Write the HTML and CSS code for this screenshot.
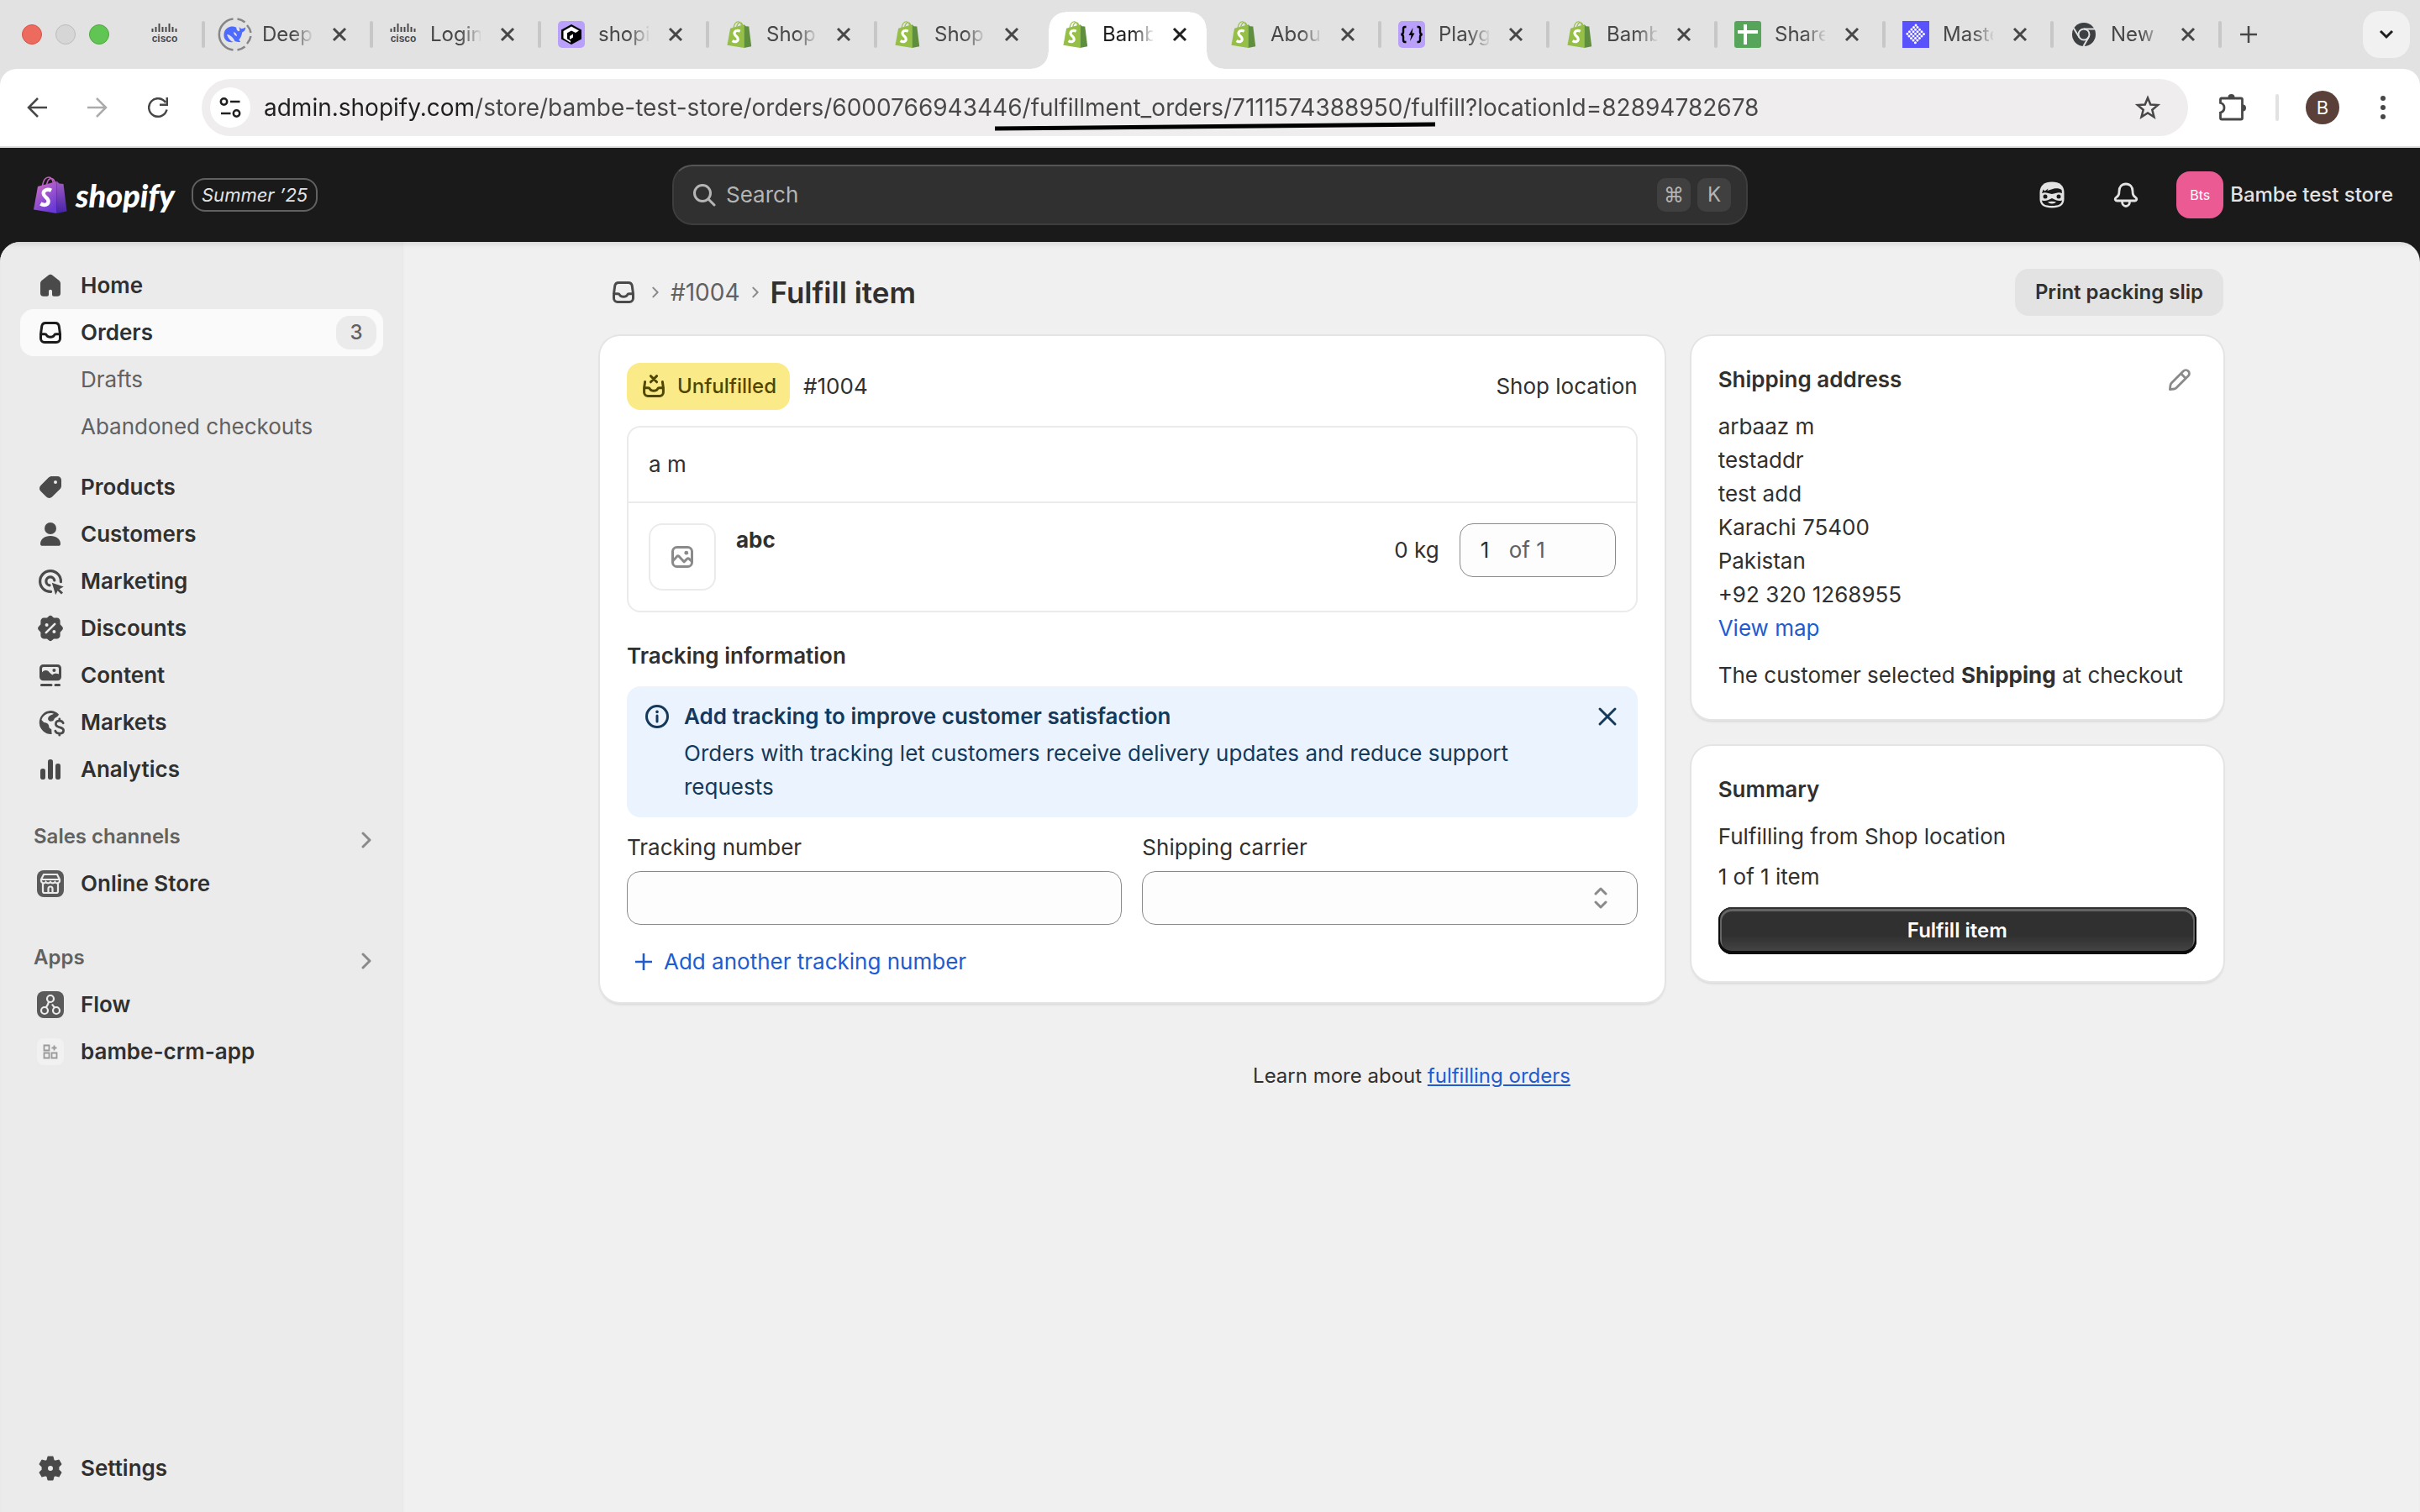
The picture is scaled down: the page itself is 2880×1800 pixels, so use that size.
FILE: index.html
```html
<!DOCTYPE html>
<html lang="en">
<head>
    <meta charset="UTF-8">
    <meta name="viewport" content="width=device-width, initial-scale=1.0">
    <title>Fulfill item</title>
    <link rel="stylesheet" href="styles.css">
</head>
<body>
    <!-- shared icons -->
    <svg class="sprite" aria-hidden="true">
        <defs>
            <linearGradient id="bagLeft" x1="0" y1="0" x2="0.6" y2="1">
                <stop offset="0" stop-color="#d873c4"/>
                <stop offset="1" stop-color="#6a3ad6"/>
            </linearGradient>
            <linearGradient id="bagRight" x1="0" y1="0" x2="0" y2="1">
                <stop offset="0" stop-color="#a45bc8"/>
                <stop offset="1" stop-color="#4424a8"/>
            </linearGradient>
        </defs>
        <symbol id="close" viewBox="0 0 24 24">
            <path d="M5 5l14 14M19 5L5 19" fill="none" stroke="currentColor" stroke-width="3"/>
        </symbol>
        <symbol id="bag" viewBox="0 0 40 44">
            <path class="bag-handle" d="M10.500 11C11.500 5 14 1 18 1s5 3 5.500 8M15.500 10c.8-4.500 3-7.500 5.500-7.500 3 0 4 2.500 4.300 6" fill="none" stroke-width="1.600"/>
            <path class="bag-left" d="M5 12l22.500-6v38L0 39.500z"/>
            <path class="bag-right" d="M27.500 5.500l3 3 5 .5 4 32.500-12 2.500z"/>
            <path d="M21 16.800c-4.500-2.300-9.300-.4-9.300 3.500 0 4.200 5.900 4.900 5.900 9.300 0 4.200-4.600 5.700-9.300 2.900" fill="none" stroke="#fff" stroke-width="4.400"/>
        </symbol>
        <symbol id="order" viewBox="0 0 20 20">
            <path d="M4.250 10.800l.6-4.500c.2-1.200 1.100-2 2.300-2h5.700c1.200 0 2.100.8 2.300 2l.6 4.500v2.700a2.250 2.250 0 0 1-2.250 2.250h-7a2.250 2.250 0 0 1-2.250-2.250zM4.300 10.900h2.400c.5 0 .9.3 1.100.7.4.7 1.100 1 2.200 1s1.800-.3 2.200-1c.2-.4.6-.7 1.100-.7h2.400" fill="none" stroke="currentColor" stroke-width="1.500"/>
        </symbol>
        <symbol id="chevron" viewBox="0 0 12 20">
            <path d="M2 2l8 8-8 8" fill="none" stroke="currentColor" stroke-width="3" stroke-linecap="round" stroke-linejoin="round"/>
        </symbol>
    </svg>

    <div class="tab-strip">
        <div class="window-buttons">
            <button class="dot red" aria-label="Close window"></button>
            <button class="dot grey" aria-label="Minimize window"></button>
            <button class="dot green" aria-label="Zoom window"></button>
        </div>
        <a class="pinned" href="#" aria-label="Cisco">
            <svg class="favicon" viewBox="0 0 32 32">
                <path d="M1.500 9v4M5.500 7v6M9.500 3v10M13.500 7v6M17.500 7v6M21.500 3v10M25.500 7v6M29.500 9v4" stroke="#4a4a4a" stroke-width="2"/>
                <text x="16" y="25" text-anchor="middle" class="cisco-name">cisco</text>
            </svg>
        </a>
        <nav class="tabs" aria-label="Tabs">
            <div class="tab">
                <svg class="favicon ring" viewBox="0 0 40 40">
                    <g fill="none" stroke="#868686" stroke-width="2.500">
                        <path d="M17.500 1.500a18.600 18.600 0 0 0 0 37"/>
                        <path d="M22.500 1.500a18.600 18.600 0 0 1 9 4M34 9a18.600 18.600 0 0 1 4.500 9M38.500 22a18.600 18.600 0 0 1-4.500 9M31.500 34.500a18.600 18.600 0 0 1-9 4"/>
                    </g>
                    <path d="M7 17c2-5 8-8 14-5.500l1 3.500c1 1 2 1.500 3 1 .5-1.500 0-3-.5-5 1 1 2 2.200 3 2.200 1.500-.2 3-.6 4.700-1.700.3 3-1.500 5-4 6-.5 4-2 7-4 9l2 2.300c-2 .5-4 .2-6-.6C13 31 7 27.500 6.500 22c-.1-2 0-3.500.5-5z" fill="#4d6bfe"/>
                    <path d="M10 20c4 .3 8 4 10 9-4 .5-8-3-10-9zM18 17c2 .5 4 2.500 4 5-2-.5-4-2-4-5z" fill="#e2e2e2"/>
                </svg>
                <a class="tab-title" href="#">Deep</a>
                <button class="tab-close" aria-label="Close tab"><svg><use href="#close"/></svg></button>
            </div>
            <div class="tab">
                <svg class="favicon" viewBox="0 0 32 32">
                    <path d="M1.500 9v4M5.500 7v6M9.500 3v10M13.500 7v6M17.500 7v6M21.500 3v10M25.500 7v6M29.500 9v4" stroke="#4a4a4a" stroke-width="2"/>
                    <text x="16" y="25" text-anchor="middle" class="cisco-name">cisco</text>
                </svg>
                <a class="tab-title" href="#">Login</a>
                <button class="tab-close" aria-label="Close tab"><svg><use href="#close"/></svg></button>
            </div>
            <div class="tab">
                <svg class="favicon" viewBox="0 0 32 32">
                    <rect width="32" height="32" rx="5" fill="#b8a0fb"/>
                    <path d="M16 4l12 6.500v11L16 28 4 21.500v-11z" fill="#000"/>
                    <path d="M16 6.500l9 5-4 2.500-5-2.500-5 2.800v7l4 2.500v2L6.500 20.500v-8.500z" fill="#fff"/>
                    <path d="M14 18l4-2.500v4l-4 2.500z" fill="#fff"/>
                </svg>
                <a class="tab-title" href="#">shopi</a>
                <button class="tab-close" aria-label="Close tab"><svg><use href="#close"/></svg></button>
            </div>
            <div class="tab">
                <svg class="favicon green-bag"><use href="#bag"/></svg>
                <a class="tab-title" href="#">Shop</a>
                <button class="tab-close" aria-label="Close tab"><svg><use href="#close"/></svg></button>
            </div>
            <div class="tab">
                <svg class="favicon green-bag"><use href="#bag"/></svg>
                <a class="tab-title" href="#">Shop</a>
                <button class="tab-close" aria-label="Close tab"><svg><use href="#close"/></svg></button>
            </div>
            <div class="tab active">
                <svg class="favicon green-bag"><use href="#bag"/></svg>
                <a class="tab-title" href="#">Bamb</a>
                <button class="tab-close" aria-label="Close tab"><svg><use href="#close"/></svg></button>
            </div>
            <div class="tab">
                <svg class="favicon green-bag"><use href="#bag"/></svg>
                <a class="tab-title" href="#">Abou</a>
                <button class="tab-close" aria-label="Close tab"><svg><use href="#close"/></svg></button>
            </div>
            <div class="tab">
                <svg class="favicon" viewBox="0 0 32 32">
                    <rect width="32" height="32" rx="5" fill="#b8a0fb"/>
                    <path d="M9.500 7H8Q6 7 6 9.500v3.500q0 2.500-2.500 3 2.500.5 2.500 3v3.500Q6 25 8 25h1.500M22.500 7H24q2 0 2 2.500v3.500q0 2.500 2.500 3-2.500.5-2.500 3v3.500q0 2.500-2 2.500h-1.500" fill="none" stroke="#000" stroke-width="2.400"/>
                    <path d="M17.500 8l-5 9h3l-1.500 7 5.500-9.500h-3z" fill="#000"/>
                </svg>
                <a class="tab-title" href="#">Playg</a>
                <button class="tab-close" aria-label="Close tab"><svg><use href="#close"/></svg></button>
            </div>
            <div class="tab">
                <svg class="favicon green-bag"><use href="#bag"/></svg>
                <a class="tab-title" href="#">Bamb</a>
                <button class="tab-close" aria-label="Close tab"><svg><use href="#close"/></svg></button>
            </div>
            <div class="tab">
                <svg class="favicon" viewBox="0 0 32 32">
                    <rect width="32" height="32" rx="3" fill="#57a55a"/>
                    <path d="M13 4v24M4 13h24" stroke="#fff" stroke-width="4"/>
                </svg>
                <a class="tab-title" href="#">Share</a>
                <button class="tab-close" aria-label="Close tab"><svg><use href="#close"/></svg></button>
            </div>
            <div class="tab">
                <svg class="favicon" viewBox="0 0 32 32">
                    <rect width="32" height="32" fill="#5a52fa"/>
                    <g stroke="#fff" stroke-width="3" stroke-linecap="round" stroke-dasharray="0 3.600">
                        <path d="M16 5L5 16M18 7.600L7.500 18.500M20.500 10.200L10 21M23 12.800L12.500 23.600M25.500 15.400L14.500 26.500" fill="none"/>
                    </g>
                </svg>
                <a class="tab-title" href="#">Maste</a>
                <button class="tab-close" aria-label="Close tab"><svg><use href="#close"/></svg></button>
            </div>
            <div class="tab">
                <svg class="favicon" viewBox="0 0 32 32">
                    <circle cx="16" cy="16" r="14" fill="#3c4043"/>
                    <circle cx="16" cy="16" r="6.500" fill="none" stroke="#e2e2e2" stroke-width="2"/>
                    <path d="M16 9.500h13M10.400 19.200L3.800 8.500M21.600 19.200L15.500 30" stroke="#e2e2e2" stroke-width="2"/>
                </svg>
                <a class="tab-title" href="#">New</a>
                <button class="tab-close" aria-label="Close tab"><svg><use href="#close"/></svg></button>
            </div>
        </nav>
        <button class="new-tab" aria-label="New tab">
            <svg viewBox="0 0 24 24"><path d="M12 2v20M2 12h20" stroke="currentColor" stroke-width="2.500"/></svg>
        </button>
        <button class="tab-search" aria-label="Search tabs">
            <svg viewBox="0 0 24 24"><path d="M5 8l7 7 7-7" fill="none" stroke="currentColor" stroke-width="3"/></svg>
        </button>
    </div>

    <div class="toolbar">
        <div class="history-buttons">
            <button aria-label="Back"><svg viewBox="0 0 24 24"><path d="M24 12H2M13 1L2 12l11 11" fill="none" stroke="currentColor" stroke-width="2.500"/></svg></button>
            <button class="disabled" aria-label="Forward"><svg viewBox="0 0 24 24"><path d="M0 12h22M11 1l11 11-11 11" fill="none" stroke="currentColor" stroke-width="2.500"/></svg></button>
            <button aria-label="Reload"><svg viewBox="0 0 24 24"><path d="M22.500 14.500A10.800 10.800 0 1 1 21 6M22.800 0v8.700H14" fill="none" stroke="currentColor" stroke-width="2.500"/></svg></button>
        </div>
        <div class="address-bar">
            <button class="site-info" aria-label="Site information">
                <svg viewBox="0 0 26 26"><g fill="none" stroke="currentColor" stroke-width="2.500"><circle cx="5.500" cy="6" r="3.700"/><circle cx="20.500" cy="20" r="3.700"/><path d="M13 6h11.500M2 20h11.500"/></g></svg>
            </button>
            <input class="url" type="text" aria-label="Address" value="admin.shopify.com/store/bambe-test-store/orders/6000766943446/fulfillment_orders/7111574388950/fulfill?locationId=82894782678">
            <button class="star" aria-label="Bookmark this page">
                <svg viewBox="0 0 32 32"><path d="M16 4.500l3.300 8 8.700.6-6.700 5.600 2.200 8.500L16 22.500l-7.500 4.700 2.200-8.500L4 13.100l8.700-.6z" fill="none" stroke="currentColor" stroke-width="2.500"/></svg>
            </button>
            <svg class="marker" viewBox="0 0 524 12" aria-hidden="true"><path d="M0 9L524 4" stroke="#000" stroke-width="5"/></svg>
        </div>
        <button class="icon-button" aria-label="Extensions">
            <svg viewBox="0 0 40 40"><path d="M7 9h24a1.500 1.500 0 0 1 1.500 1.500v22A1.500 1.500 0 0 1 31 34H8a1.500 1.500 0 0 1-1.500-1.500V26c6-1.500 6-10 0-11.500V10.500A1.500 1.500 0 0 1 8 9" fill="none" stroke="currentColor" stroke-width="2.800"/><path d="M15.500 8a4 4 0 0 1 8 0zM33 16.500a4 4 0 0 1 0 8z" fill="currentColor"/></svg>
        </button>
        <span class="toolbar-line"></span>
        <button class="profile" aria-label="Profile">B</button>
        <button class="icon-button" aria-label="Menu">
            <svg viewBox="0 0 40 40"><g fill="currentColor"><circle cx="20" cy="9" r="3"/><circle cx="20" cy="20" r="3"/><circle cx="20" cy="31" r="3"/></g></svg>
        </button>
    </div>

    <header class="top-bar">
        <div class="brand">
            <svg class="purple-bag"><use href="#bag"/></svg>
            <span class="wordmark">shopify</span>
            <span class="edition">Summer ’25</span>
        </div>
        <div class="search">
            <svg class="search-icon" viewBox="0 0 28 28"><g fill="none" stroke="currentColor" stroke-width="3" stroke-linecap="round"><circle cx="12" cy="12" r="9.500"/><path d="M19 19l7 7"/></g></svg>
            <input type="search" placeholder="Search" aria-label="Search">
            <kbd>⌘</kbd>
            <kbd>K</kbd>
        </div>
        <div class="top-actions">
            <button class="top-icon" aria-label="Sidekick">
                <svg viewBox="0 0 40 40">
                    <path d="M20 4.500C11 4.500 5.500 9 5.500 17v8c0 7 5 10.500 14.500 10.500S34.500 32 34.500 25v-8c0-8-5.500-12.500-14.500-12.500z" fill="#e3e3e3"/>
                    <path d="M8 18c.8-2 1.500-3.500 1.500-4.500l2 2 4-3-1 2.500 8-2.500c4-.5 7 0 9 1.500l.5 4c-4-2-7.500 0-12 1-4.500-1-8-3-12-1z" fill="#1a1a1a"/>
                    <circle cx="12" cy="22" r="2.500" fill="#1a1a1a"/><circle cx="28" cy="22" r="2.500" fill="#1a1a1a"/>
                    <path d="M8 26.500c4 1.500 7 0 12-2.500 5 2.500 8 4 12 2.500-.5 4.500-4 6.500-12 6.500S8.500 31 8 26.500z" fill="#1a1a1a"/>
                    <path d="M15 28.500c3-1 7-1 10 0-2 2.500-8 2.500-10 0z" fill="#e3e3e3"/>
                </svg>
            </button>
            <button class="top-icon" aria-label="Notifications">
                <svg viewBox="0 0 40 40"><path d="M20 7c-5 0-8 3.700-8 8.500 0 4.500-1 5.500-4 8-1.500 1.500-.5 3.500 1.500 3.500h21c2 0 3-2 1.500-3.500-3-2.500-4-3.500-4-8C28 10.700 25 7 20 7zM15.500 28c0 3 2 5.500 4.500 5.500s4.500-2.500 4.500-5.500" fill="none" stroke="currentColor" stroke-width="2.800"/></svg>
            </button>
            <button class="store">
                <span class="store-avatar">Bts</span>
                <span>Bambe test store</span>
            </button>
        </div>
    </header>

    <div class="frame">
        <aside class="sidebar">
            <nav class="nav" aria-label="Main">
                <a class="nav-item" href="#">
                    <svg viewBox="0 0 20 20"><path d="M8.600 4a2.200 2.200 0 0 1 2.800 0L15.200 7c.5.5.8 1.100.8 1.800v5.700a1.900 1.900 0 0 1-1.900 1.900h-2.100a1 1 0 0 1-1-1v-2a1 1 0 0 0-2 0v2a1 1 0 0 1-1 1H5.900A1.900 1.900 0 0 1 4 14.500V8.800c0-.7.3-1.300.8-1.800z"/></svg>
                    Home
                </a>
                <a class="nav-item selected" href="#">
                    <svg><use href="#order"/></svg>
                    Orders
                    <span class="count">3</span>
                </a>
                <a class="nav-item sub" href="#">Drafts</a>
                <a class="nav-item sub" href="#">Abandoned checkouts</a>
                <a class="nav-item spaced" href="#">
                    <svg viewBox="0 0 20 20"><path fill-rule="evenodd" d="M10.800 3.500h3.400a2.300 2.300 0 0 1 2.300 2.300v3.400c0 .7-.3 1.400-.8 1.900l-4.700 4.700a2.400 2.400 0 0 1-3.400 0l-3.400-3.400a2.400 2.400 0 0 1 0-3.400l4.700-4.700c.5-.5 1.200-.8 1.900-.8zM13 8a1 1 0 1 0 0-2 1 1 0 0 0 0 2z"/></svg>
                    Products
                </a>
                <a class="nav-item" href="#">
                    <svg viewBox="0 0 20 20"><circle cx="10" cy="6.500" r="3.500"/><path d="M10 11c-3.600 0-6 2-6 4.700 0 .8.500 1.200 1.200 1.200h9.600c.7 0 1.200-.4 1.200-1.200C16 13 13.600 11 10 11z"/></svg>
                    Customers
                </a>
                <a class="nav-item" href="#">
                    <svg viewBox="0 0 20 20"><path d="M10.300 16.200a6.200 6.200 0 1 1 5.900-5.900" fill="none" stroke="currentColor" stroke-width="1.600" stroke-linecap="round"/><path d="M9.500 12.400A2.500 2.500 0 1 1 12.400 9.500" fill="none" stroke="currentColor" stroke-width="1.600" stroke-linecap="round"/><path d="M10.900 10.900l7 2.400-2.600 1.300 2.200 2.200-1 1-2.200-2.200-1.200 2.500z"/></svg>
                    Marketing
                </a>
                <a class="nav-item" href="#">
                    <svg viewBox="0 0 20 20"><path d="M8.700 3.100a1.800 1.800 0 0 1 2.600 0l.7.700h1.900a1.800 1.800 0 0 1 1.900 1.900v1.900l1 1.100a1.800 1.800 0 0 1 0 2.600l-1 1.100v1.900a1.800 1.800 0 0 1-1.900 1.900H12l-.7.700a1.800 1.800 0 0 1-2.600 0L8 16.200H6.100a1.800 1.800 0 0 1-1.900-1.900v-1.900l-1-1.100a1.800 1.800 0 0 1 0-2.600l1-1.100V5.700a1.800 1.800 0 0 1 1.900-1.900H8z"/><path d="M12.600 7.400l-5.200 5.200" stroke="#ebebeb" stroke-width="1.300" stroke-linecap="round"/><circle cx="7.800" cy="8" r="1" fill="#ebebeb"/><circle cx="12.200" cy="12" r="1" fill="#ebebeb"/></svg>
                    Discounts
                </a>
                <a class="nav-item" href="#">
                    <svg viewBox="0 0 20 20"><path fill-rule="evenodd" d="M5.700 3.500h8.600a2.200 2.200 0 0 1 2.200 2.200v5.200a2.200 2.200 0 0 1-2.200 2.200H5.700a2.200 2.200 0 0 1-2.200-2.200V5.700a2.200 2.200 0 0 1 2.200-2.200zM5 8.200c1.600-1.600 3-1.600 4.400 0l1.700 1.500c1-.9 2.400-1.200 3.900-.5V5.900a.9.900 0 0 0-.9-.9H5.900a.9.900 0 0 0-.9.9z"/><circle cx="12.200" cy="7" r="1"/><path d="M4.700 15.800h5.800M13 15.800h2.300" stroke="currentColor" stroke-width="1.500" stroke-linecap="round"/></svg>
                    Content
                </a>
                <a class="nav-item" href="#">
                    <svg viewBox="0 0 20 20"><path fill-rule="evenodd" d="M10 3a7 7 0 1 0 .8 14l-.2-3c-1-.2-1.600-1-1.500-2-.4-1.500-1.600-1.800-3-2L4.700 8.500A5.500 5.500 0 0 1 10 4.500c1 0 1.600.1 2 .4-.8.600-2.500.8-3.200 2-.6 1.200 0 2.200 1.200 2.500 1.600 0 2-.6 2.300-1.500.8-1.200 2.200-1.200 2.700-2.700A7 7 0 0 0 10 3z"/><path d="M17.600 10.400c-.4-.9-1.300-1.300-2.200-1.300-1.300 0-2.200.7-2.200 1.900 0 2.600 4.600 1.200 4.600 3.700 0 1.200-1 1.900-2.400 1.900-1.200 0-2.200-.5-2.500-1.500M15.400 8v1M15.400 16.600v1" fill="none" stroke="currentColor" stroke-width="1.400" stroke-linecap="round"/></svg>
                    Markets
                </a>
                <a class="nav-item" href="#">
                    <svg viewBox="0 0 20 20"><rect x="4" y="9.500" width="3" height="6.500" rx="1.400"/><rect x="8.500" y="4" width="3" height="12" rx="1.400"/><rect x="13" y="6.500" width="3" height="9.500" rx="1.400"/></svg>
                    Analytics
                </a>
                <button class="nav-heading">Sales channels <svg><use href="#chevron"/></svg></button>
                <a class="nav-item" href="#">
                    <svg viewBox="0 0 40 40"><rect x="4" y="4" width="32" height="32" rx="8" fill="#5a5a5a"/><g fill="none" stroke="#ebebeb" stroke-width="2.200"><path d="M12 9h16l3 6v2a3 3 0 0 1-5.500 1 3.500 3.500 0 0 1-5.500 0 3.500 3.500 0 0 1-5.500 0A3 3 0 0 1 9 17v-2zM9.500 15h21M11 19.500v9.500a2 2 0 0 0 2 2h14a2 2 0 0 0 2-2v-9.500M17.500 31v-5a2.500 2.500 0 0 1 5 0v5"/></g></svg>
                    Online Store
                </a>
                <button class="nav-heading apps">Apps <svg><use href="#chevron"/></svg></button>
                <a class="nav-item" href="#">
                    <svg viewBox="0 0 40 40"><rect x="4" y="4" width="32" height="32" rx="8" fill="#5a5a5a"/><g fill="none" stroke="#ebebeb" stroke-width="2.200"><circle cx="20" cy="13" r="4"/><circle cx="13" cy="27" r="4"/><circle cx="27" cy="27" r="4"/><path d="M18 16.500c-.5 3-2 5-3.200 6.800M22 19.500c.8 1.500 1.800 2.600 2.800 3.800"/></g></svg>
                    Flow
                </a>
                <a class="nav-item" href="#">
                    <svg viewBox="0 0 40 40"><rect x="4" y="4" width="32" height="32" rx="8" fill="#f1f1f1"/><g fill="none" stroke="#9a9a9a" stroke-width="1.800"><path d="M12.500 12.500h6v6h-6zM12.500 21.500h6v6h-6zM21.500 21.500h6v6h-6zM24.500 12.500v6M21.500 15.500h6"/></g></svg>
                    bambe-crm-app
                </a>
            </nav>
            <a class="nav-item" href="#">
                <svg viewBox="0 0 20 20"><path fill-rule="evenodd" d="M8.700 3.200h2.600l.5 2.100 1 .6 2.100-.6 1.300 2.200L14.700 9v2l1.500 1.500-1.300 2.200-2.100-.6-1 .6-.5 2.100H8.700l-.5-2.100-1-.6-2.100.6-1.300-2.200L5.300 11V9L3.800 7.500l1.300-2.200 2.100.6 1-.6zM10 12a2 2 0 1 0 0-4 2 2 0 0 0 0 4z" stroke="currentColor" stroke-width="1" stroke-linejoin="round"/></svg>
                Settings
            </a>
        </aside>

        <main class="main">
            <div class="page">
                <div class="page-header">
                    <nav class="breadcrumbs" aria-label="Breadcrumbs">
                        <a class="crumb-icon" href="#" aria-label="Orders"><svg><use href="#order"/></svg></a>
                        <svg class="crumb-arrow"><use href="#chevron"/></svg>
                        <a class="crumb" href="#">#1004</a>
                        <svg class="crumb-arrow"><use href="#chevron"/></svg>
                        <h1>Fulfill item</h1>
                    </nav>
                    <button class="print">Print packing slip</button>
                </div>

                <div class="layout">
                    <section class="card">
                        <div class="order-header">
                            <span class="badge">
                                <svg viewBox="0 0 20 20"><g fill="none" stroke="currentColor" stroke-width="1.500" stroke-linecap="round" stroke-linejoin="round"><path d="M4.800 7.300l-.5 3.500v2.700a2.250 2.250 0 0 0 2.250 2.250h6.900a2.250 2.250 0 0 0 2.250-2.250v-2.700l-.5-3.500M4.300 10.900h2.400c.5 0 .9.3 1.100.7.4.7 1.100 1 2.200 1s1.800-.3 2.200-1c.2-.4.6-.7 1.100-.7h2.400M8.200 3.800l3.600 3.600M11.800 3.800L8.200 7.400"/></g></svg>
                                Unfulfilled
                            </span>
                            <span>#1004</span>
                            <span class="location">Shop location</span>
                        </div>

                        <div class="items">
                            <div class="customer">a m</div>
                            <div class="item">
                                <div class="thumb">
                                    <svg viewBox="0 0 20 20"><g fill="none" stroke="currentColor" stroke-width="1.500" stroke-linejoin="round"><rect x="4.250" y="4.250" width="11.500" height="11.500" rx="2.500"/><path d="M4.500 12.200l2.300-2.500c.4-.4.900-.4 1.300 0l2.900 3.200 1.800-1.700c.4-.4.900-.4 1.300 0l1.600 1.500"/></g><circle cx="12.400" cy="7.600" r="1.200" fill="currentColor"/></svg>
                                </div>
                                <strong class="item-name">abc</strong>
                                <span class="weight">0 kg</span>
                                <label class="quantity">
                                    <input type="text" value="1" aria-label="Quantity">
                                    <span>of 1</span>
                                </label>
                            </div>
                        </div>

                        <h2>Tracking information</h2>
                        <div class="banner">
                            <svg class="banner-icon" viewBox="0 0 20 20"><circle cx="10" cy="10" r="6.250" fill="none" stroke="currentColor" stroke-width="1.500"/><path d="M10 9.500v3.500" stroke="currentColor" stroke-width="1.500" stroke-linecap="round"/><circle cx="10" cy="7.200" r=".9" fill="currentColor"/></svg>
                            <div class="banner-text">
                                <h3>Add tracking to improve customer satisfaction</h3>
                                <p>Orders with tracking let customers receive delivery updates and reduce support requests</p>
                            </div>
                            <button class="banner-close" aria-label="Dismiss">
                                <svg viewBox="0 0 20 20"><path d="M5.500 5.500l9 9M14.500 5.500l-9 9" stroke="currentColor" stroke-width="1.500" stroke-linecap="round"/></svg>
                            </button>
                        </div>

                        <div class="fields">
                            <div class="field">
                                <label for="trackingNumber">Tracking number</label>
                                <input type="text" id="trackingNumber">
                            </div>
                            <div class="field">
                                <label for="carrier">Shipping carrier</label>
                                <div class="select">
                                    <select id="carrier"><option></option></select>
                                    <svg viewBox="0 0 16 28"><path d="M2 9l6-6 6 6M2 19l6 6 6-6" fill="none" stroke="currentColor" stroke-width="3" stroke-linecap="round" stroke-linejoin="round"/></svg>
                                </div>
                            </div>
                        </div>
                        <button class="add-number">
                            <svg viewBox="0 0 20 20"><path d="M10 0v20M0 10h20" stroke="currentColor" stroke-width="2.600"/></svg>
                            Add another tracking number
                        </button>
                    </section>

                    <div class="side">
                        <section class="card">
                            <div class="card-title">
                                <h2>Shipping address</h2>
                                <button class="edit" aria-label="Edit shipping address">
                                    <svg viewBox="0 0 20 20"><g fill="none" stroke="currentColor" stroke-width="1.400" stroke-linejoin="round"><path d="M4.200 15.800l.3-2.600c.1-.5.300-.9.600-1.200l7.100-7.100a2 2 0 0 1 2.900 2.900L8 14.900c-.3.300-.7.500-1.200.6zM10.800 6.400l2.800 2.800"/></g></svg>
                                </button>
                            </div>
                            <address>
                                arbaaz m<br>
                                testaddr<br>
                                test add<br>
                                Karachi 75400<br>
                                Pakistan<br>
                                +92 320 1268955<br>
                                <a href="#">View map</a>
                            </address>
                            <p class="method">The customer selected <strong>Shipping</strong> at checkout</p>
                        </section>

                        <section class="card">
                            <h2>Summary</h2>
                            <p class="from">Fulfilling from Shop location</p>
                            <p class="total">1 of 1 item</p>
                            <button class="fulfill">Fulfill item</button>
                        </section>
                    </div>
                </div>

                <p class="learn-more">Learn more about <a href="#">fulfilling orders</a></p>
            </div>
        </main>
    </div>
</body>
</html>
```
FILE: styles.css
```css
* {
    box-sizing: border-box;
}
body {
    margin: 0;
    min-height: 100vh;
    display: flex;
    flex-direction: column;
    background: #1a1a1a;
    color: #303030;
    font-family: Inter, "Noto Sans", sans-serif;
    font-size: 26px;
    line-height: 40px;
}
h1, h2, h3, p {
    margin: 0;
}
h2, h3 {
    font-size: 26px;
    font-weight: 600;
}
strong {
    font-weight: 650;
}
a {
    color: #205cd0;
    text-decoration: none;
}
button, input, select {
    font: inherit;
    color: inherit;
}
button {
    padding: 0;
    border: 0;
    background: none;
    cursor: pointer;
}
svg {
    display: block;
    flex-shrink: 0;
}
.sprite {
    position: absolute;
    width: 0;
    height: 0;
}

/* browser tabs */
.tab-strip {
    display: flex;
    align-items: center;
    height: 82px;
    padding: 0 12px 0 26px;
    background: #e2e2e2;
    color: #474747;
}
.window-buttons {
    display: flex;
    gap: 16px;
}
.dot {
    width: 24px;
    height: 24px;
    border-radius: 50%;
}
.red {
    background: #ed6a5e;
    border: 1px solid #d75548;
}
.grey {
    background: #d6d6d6;
    border: 1px solid #bcbcbc;
}
.green {
    background: #61c554;
    border: 1px solid #50a73f;
}
.pinned {
    margin: 0 28px 0 50px;
}
.favicon {
    width: 32px;
    height: 32px;
    overflow: visible;
}
.ring {
    width: 40px;
    height: 40px;
    margin: 0 -4px;
}
.cisco-name {
    font: 700 12px "Liberation Sans", sans-serif;
    fill: #4a4a4a;
}
.green-bag {
    --left: #95bf47;
    --right: #5e8e3e;
    --handle: #95bf47;
}
.bag-left {
    fill: var(--left);
}
.bag-right {
    fill: var(--right);
}
.bag-handle {
    stroke: var(--handle);
}
.tabs {
    display: flex;
    align-self: stretch;
}
.tab {
    position: relative;
    z-index: 0;
    display: flex;
    align-items: center;
    width: 200px;
}
.tab::before, .tabs::after {
    content: "";
    align-self: center;
    width: 4px;
    height: 32px;
    margin-right: 20px;
    border-radius: 2px;
    background: #c7c7c7;
}
.tabs::after {
    margin-right: 0;
}
.active::before, .active + .tab::before {
    background: none;
}
.active {
    color: #1f1f1f;
}
/* white shape of the current tab, with its two curved feet */
.active::after {
    content: "";
    position: absolute;
    z-index: -1;
    top: 14px;
    bottom: 0;
    left: -12px;
    right: -16px;
    background:
        radial-gradient(circle at 0 0, transparent 19px, #fff 20px) left bottom / 20px 20px no-repeat,
        radial-gradient(circle at 100% 0, transparent 19px, #fff 20px) right bottom / 20px 20px no-repeat,
        linear-gradient(#fff, #fff) center bottom / calc(100% - 40px) 48px no-repeat,
        radial-gradient(circle at 100% 100%, #fff 19px, transparent 20px) 20px 0 / 20px 20px no-repeat,
        radial-gradient(circle at 0 100%, #fff 19px, transparent 20px) calc(100% - 20px) 0 / 20px 20px no-repeat,
        linear-gradient(#fff, #fff) center top / calc(100% - 80px) 20px no-repeat;
}
.tab-title {
    width: 60px;
    margin-left: 16px;
    overflow: hidden;
    color: inherit;
    font-size: 24px;
    white-space: nowrap;
    -webkit-mask-image: linear-gradient(to right, #000 36px, transparent 62px);
    mask-image: linear-gradient(to right, #000 36px, transparent 62px);
}
.tab-close {
    margin-left: 20px;
}
.tab-close svg, .tab-search svg, .new-tab svg {
    width: 24px;
    height: 24px;
}
.new-tab {
    margin-left: 20px;
}
.tab-search {
    display: flex;
    align-items: center;
    justify-content: center;
    width: 56px;
    height: 56px;
    margin-left: auto;
    border-radius: 20px;
    background: #f1f1f1;
    color: #1f1f1f;
}

/* browser toolbar */
.toolbar {
    display: flex;
    align-items: center;
    gap: 32px;
    height: 94px;
    padding: 0 24px 0 20px;
    border-bottom: 2px solid #dedede;
    border-radius: 20px 20px 0 0;
    background: #fff;
    box-shadow: 0 -20px 0 #e2e2e2;
    color: #474747;
    z-index: -1;
}
.history-buttons {
    display: flex;
    gap: 24px;
}
.history-buttons button {
    display: flex;
    align-items: center;
    justify-content: center;
    width: 48px;
    height: 48px;
}
.history-buttons svg {
    width: 24px;
    height: 24px;
}
.disabled {
    color: #ababab;
}
.address-bar {
    position: relative;
    display: flex;
    flex: 1;
    align-items: center;
    gap: 16px;
    height: 68px;
    margin-left: -4px;
    padding: 0 32px 0 10px;
    border-radius: 34px;
    background: #efedee;
}
.site-info {
    display: flex;
    align-items: center;
    justify-content: center;
    width: 48px;
    height: 48px;
    border-radius: 50%;
    background: #fff;
    color: #1f1f1f;
}
.site-info svg {
    width: 26px;
    height: 26px;
}
.url {
    flex: 1;
    min-width: 0;
    padding: 0;
    border: 0;
    font-size: 28px;
    /* the host is darker than the path */
    background: linear-gradient(to right, #1f1f1f 250px, #474747 250px);
    -webkit-background-clip: text;
    background-clip: text;
    color: transparent;
}
.star svg {
    width: 32px;
    height: 32px;
}
.marker {
    position: absolute;
    top: 50px;
    left: 944px;
    width: 524px;
    height: 12px;
}
.icon-button svg {
    width: 40px;
    height: 40px;
}
.toolbar-line {
    width: 4px;
    height: 32px;
    border-radius: 2px;
    background: #e2e2e2;
}
.profile {
    width: 40px;
    height: 40px;
    border-radius: 50%;
    background: #5a4038;
    color: #fff;
    font-size: 22px;
}

/* admin top bar */
.top-bar {
    display: grid;
    grid-template-columns: 1fr minmax(0, 1280px) 1fr;
    align-items: center;
    height: 112px;
    padding: 0 32px;
    background: #1a1a1a;
    color: #e3e3e3;
}
.brand {
    display: flex;
    align-items: center;
    padding-left: 8px;
}
.purple-bag {
    --left: url(#bagLeft);
    --right: url(#bagRight);
    --handle: #c062c0;
    width: 40px;
    height: 44px;
}
.wordmark {
    margin-left: 10px;
    color: #fff;
    font-family: Lato, sans-serif;
    font-size: 38px;
    font-style: italic;
    font-weight: 900;
}
.edition {
    height: 40px;
    margin-left: 20px;
    padding: 0 10px;
    border: 2px solid #616161;
    border-radius: 16px;
    font-size: 22px;
    font-style: italic;
    line-height: 36px;
}
.search {
    display: flex;
    align-items: center;
    gap: 8px;
    height: 72px;
    padding: 0 18px 0 22px;
    border: 2px solid #3d3d3d;
    border-top-color: #555;
    border-radius: 24px;
    background: #303030;
    color: #b5b5b5;
}
.search-icon {
    width: 28px;
    height: 28px;
}
.search input {
    flex: 1;
    min-width: 0;
    padding: 0;
    margin-left: 4px;
    border: 0;
    background: none;
}
.search input::placeholder {
    color: #b5b5b5;
}
.search kbd {
    width: 40px;
    height: 40px;
    border-radius: 10px;
    background: #404040;
    font-family: inherit;
    font-size: 24px;
    text-align: center;
}
.top-actions {
    display: flex;
    align-items: center;
    justify-content: flex-end;
}
.top-icon {
    margin-right: 48px;
}
.top-icon + .top-icon {
    margin-right: 40px;
}
.top-icon svg {
    width: 40px;
    height: 40px;
}
.store {
    display: flex;
    align-items: center;
    gap: 8px;
    font-size: 24px;
    font-weight: 550;
}
.store-avatar {
    width: 56px;
    height: 56px;
    border-radius: 16px;
    background: #eb5a93;
    color: #fff;
    font-size: 16px;
    font-weight: 400;
    line-height: 56px;
}

/* sidebar */
.frame {
    display: flex;
    flex: 1;
    overflow: hidden;
    border-radius: 24px 24px 0 0;
    background: #f0f0f0;
}
.sidebar {
    display: flex;
    flex: none;
    flex-direction: column;
    justify-content: space-between;
    width: 480px;
    padding: 24px;
    background: #ebebeb;
    box-shadow: inset 0 6px 6px -4px rgba(0, 0, 0, 0.12);
}
.nav-item {
    display: flex;
    align-items: center;
    gap: 16px;
    height: 56px;
    padding: 0 8px 0 16px;
    border-radius: 16px;
    color: #303030;
    font-weight: 600;
}
.nav-item svg {
    width: 40px;
    height: 40px;
    color: #4a4a4a;
    fill: currentColor;
}
.selected {
    background: #fafafa;
}
.selected svg {
    color: #1a1a1a;
}
.sub {
    padding-left: 72px;
    color: #616161;
    font-weight: 400;
}
.spaced {
    margin-top: 16px;
}
.count {
    width: 48px;
    height: 40px;
    margin-left: auto;
    border-radius: 16px;
    background: #ebebeb;
    color: #616161;
    font-size: 24px;
    font-weight: 550;
    text-align: center;
}
.nav-heading {
    display: flex;
    align-items: center;
    justify-content: space-between;
    width: 100%;
    height: 56px;
    margin-top: 24px;
    padding: 0 14px 0 16px;
    color: #616161;
    font-size: 24px;
    font-weight: 600;
}
.nav-heading svg {
    width: 12px;
    height: 20px;
    margin-top: 8px;
    color: #8a8a8a;
}
.apps {
    margin-top: 32px;
}

/* page */
.main {
    flex: 1;
    padding: 32px;
    box-shadow: inset 0 6px 6px -4px rgba(0, 0, 0, 0.12);
}
.page {
    max-width: 1932px;
    margin: 0 auto;
}
.page-header {
    display: flex;
    align-items: center;
    justify-content: space-between;
    margin-bottom: 24px;
}
.breadcrumbs {
    display: flex;
    align-items: center;
    gap: 14px;
    padding-left: 8px;
}
.crumb-icon {
    color: #4a4a4a;
}
.crumb-icon svg {
    width: 40px;
    height: 40px;
}
.crumb-arrow {
    width: 8px;
    height: 14px;
    color: #8a8a8a;
}
.crumb {
    color: #616161;
    font-size: 28px;
}
h1 {
    font-size: 35px;
    font-weight: 600;
}
.print {
    height: 56px;
    padding: 0 24px;
    border-radius: 16px;
    background: #e3e3e3;
    font-size: 24px;
    font-weight: 600;
}
.layout {
    display: grid;
    grid-template-columns: minmax(0, 2fr) minmax(0, 1fr);
    align-items: start;
    gap: 32px;
}
.side {
    display: grid;
    gap: 32px;
}
.card {
    padding: 32px;
    border-radius: 24px;
    background: #fff;
    box-shadow: 0 0 0 2px #e4e4e4, 0 3px 3px rgba(0, 0, 0, 0.12);
}
.order-header {
    display: flex;
    align-items: center;
    gap: 16px;
    margin-bottom: 19px;
}
.badge {
    display: flex;
    align-items: center;
    gap: 8px;
    height: 56px;
    padding: 0 16px 0 12px;
    border-radius: 16px;
    background: #fbeb88;
    color: #4f4700;
    font-size: 24px;
    font-weight: 450;
}
.badge svg {
    width: 40px;
    height: 40px;
}
.location {
    margin-left: auto;
}
.items {
    border: 2px solid #ebebeb;
    border-radius: 16px;
}
.customer {
    padding: 24px;
    border-bottom: 2px solid #ebebeb;
}
.item {
    display: flex;
    align-items: flex-start;
    gap: 24px;
    padding: 24px;
}
.thumb {
    padding: 18px;
    border: 2px solid #ebebeb;
    border-radius: 16px;
    color: #8a8a8a;
}
.thumb svg {
    width: 40px;
    height: 40px;
}
.item-name {
    flex: 1;
}
.weight {
    line-height: 64px;
}
.quantity {
    display: flex;
    align-items: center;
    width: 186px;
    height: 64px;
    padding: 0 24px;
    border: 1px solid #8a8a8a;
    border-radius: 16px;
    background: #fdfdfd;
    color: #616161;
}
.quantity input {
    width: 34px;
    padding: 0;
    border: 0;
    background: none;
    color: #303030;
}
.card > h2 + .banner {
    margin-top: 16px;
}
.items + h2 {
    margin-top: 32px;
}
.banner {
    display: flex;
    align-items: flex-start;
    padding: 16px;
    border-radius: 16px;
    background: #ebf4fe;
    color: #14395a;
}
.banner-icon, .banner-close svg {
    width: 40px;
    height: 40px;
}
.banner-text {
    flex: 1;
    margin: 0 80px 0 12px;
}
.banner-text p {
    margin-top: 4px;
}
.fields {
    display: grid;
    grid-template-columns: 1fr 1fr;
    gap: 24px;
    margin-top: 16px;
}
.field label {
    display: block;
    margin-bottom: 8px;
}
.field input, .field select {
    display: block;
    width: 100%;
    height: 64px;
    padding: 0 24px;
    border: 1px solid #8a8a8a;
    border-radius: 16px;
    background: #fdfdfd;
    appearance: none;
}
.select {
    position: relative;
}
.select svg {
    position: absolute;
    top: 18px;
    right: 36px;
    width: 16px;
    height: 28px;
    color: #8a8a8a;
    pointer-events: none;
}
.add-number {
    display: flex;
    align-items: center;
    gap: 14px;
    height: 32px;
    margin-top: 28px;
    padding-left: 10px;
    color: #205cd0;
}
.add-number svg {
    width: 20px;
    height: 20px;
}
.card-title {
    display: flex;
    justify-content: space-between;
}
.edit {
    color: #8a8a8a;
}
.edit svg {
    width: 40px;
    height: 40px;
}
address {
    margin-top: 16px;
    font-style: normal;
}
.method, .from {
    margin-top: 16px;
}
.total {
    margin-top: 8px;
}
.fulfill {
    width: 100%;
    height: 56px;
    margin-top: 16px;
    border-radius: 16px;
    background: linear-gradient(#303030 60%, #484848);
    box-shadow: inset 0 -2px 0 2px #0c0c0c, inset 0 0 0 2px #303030, inset 0 1px 0 4px rgba(255, 255, 255, 0.25);
    color: #fff;
    font-size: 24px;
    font-weight: 600;
}
.learn-more {
    margin-top: 68px;
    font-size: 24px;
    text-align: center;
}
.learn-more a {
    text-decoration: underline;
}
```
